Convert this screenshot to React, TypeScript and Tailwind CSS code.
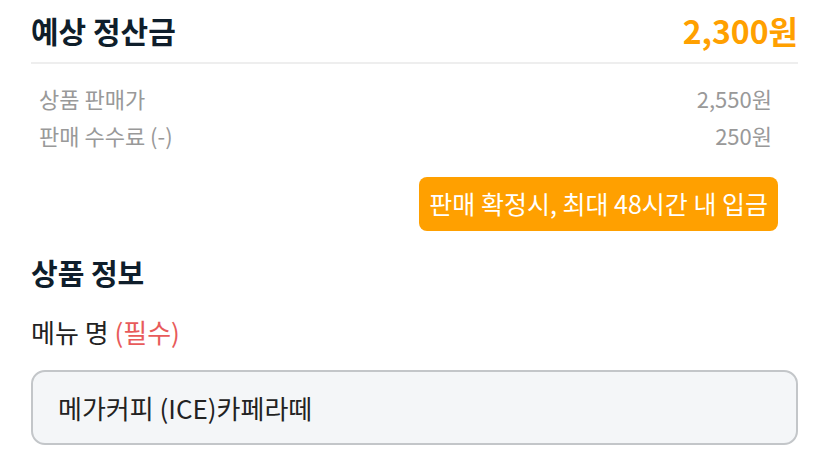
export default function App() {
  return (
    <div
      className="w-[828px] h-[461px] bg-white overflow-hidden pl-[31px] pr-[30px]"
      style={{ fontFamily: "'Noto Sans CJK KR', sans-serif" }}
    >
      <div className="flex items-center justify-between h-[64px] pb-[3px] border-b-2 border-[#eeeeee]">
        <span className="text-[30px] font-bold text-[#0f1e2b] leading-[40px]">예상 정산금</span>
        <span className="text-[32px] font-bold text-[#ffa000] leading-[40px]">2,300원</span>
      </div>
      <div className="pl-[8px] pr-[26px] pt-[18px] flex flex-col gap-[5px] text-[22px] text-[#999999] leading-[32px]">
        <div className="flex justify-between">
          <span>상품 판매가</span>
          <span>2,550원</span>
        </div>
        <div className="flex justify-between">
          <span>판매 수수료 (-)</span>
          <span>250원</span>
        </div>
      </div>
      <div className="flex justify-end pr-[20px] mt-[26px]">
        <div className="h-[54px] px-[10px] flex items-center rounded-[8px] bg-[#ffa000] text-white text-[25px]">
          판매 확정시, 최대 48시간 내 입금
        </div>
      </div>
      <div className="mt-[21px] text-[29px] font-bold text-[#0f1e2b] leading-[40px]">상품 정보</div>
      <div className="mt-[22px] text-[26px] text-[#222] leading-[36px]">
        메뉴 명 <span className="text-[#e85b5b]">(필수)</span>
      </div>
      <div className="mt-[20px] h-[75px] rounded-[14px] border-2 border-[#c3c6c9] bg-[#f4f6f8] flex items-center pl-[25px] text-[26px] text-[#222]">
        메가커피 (ICE)카페라떼
      </div>
    </div>
  );
}
